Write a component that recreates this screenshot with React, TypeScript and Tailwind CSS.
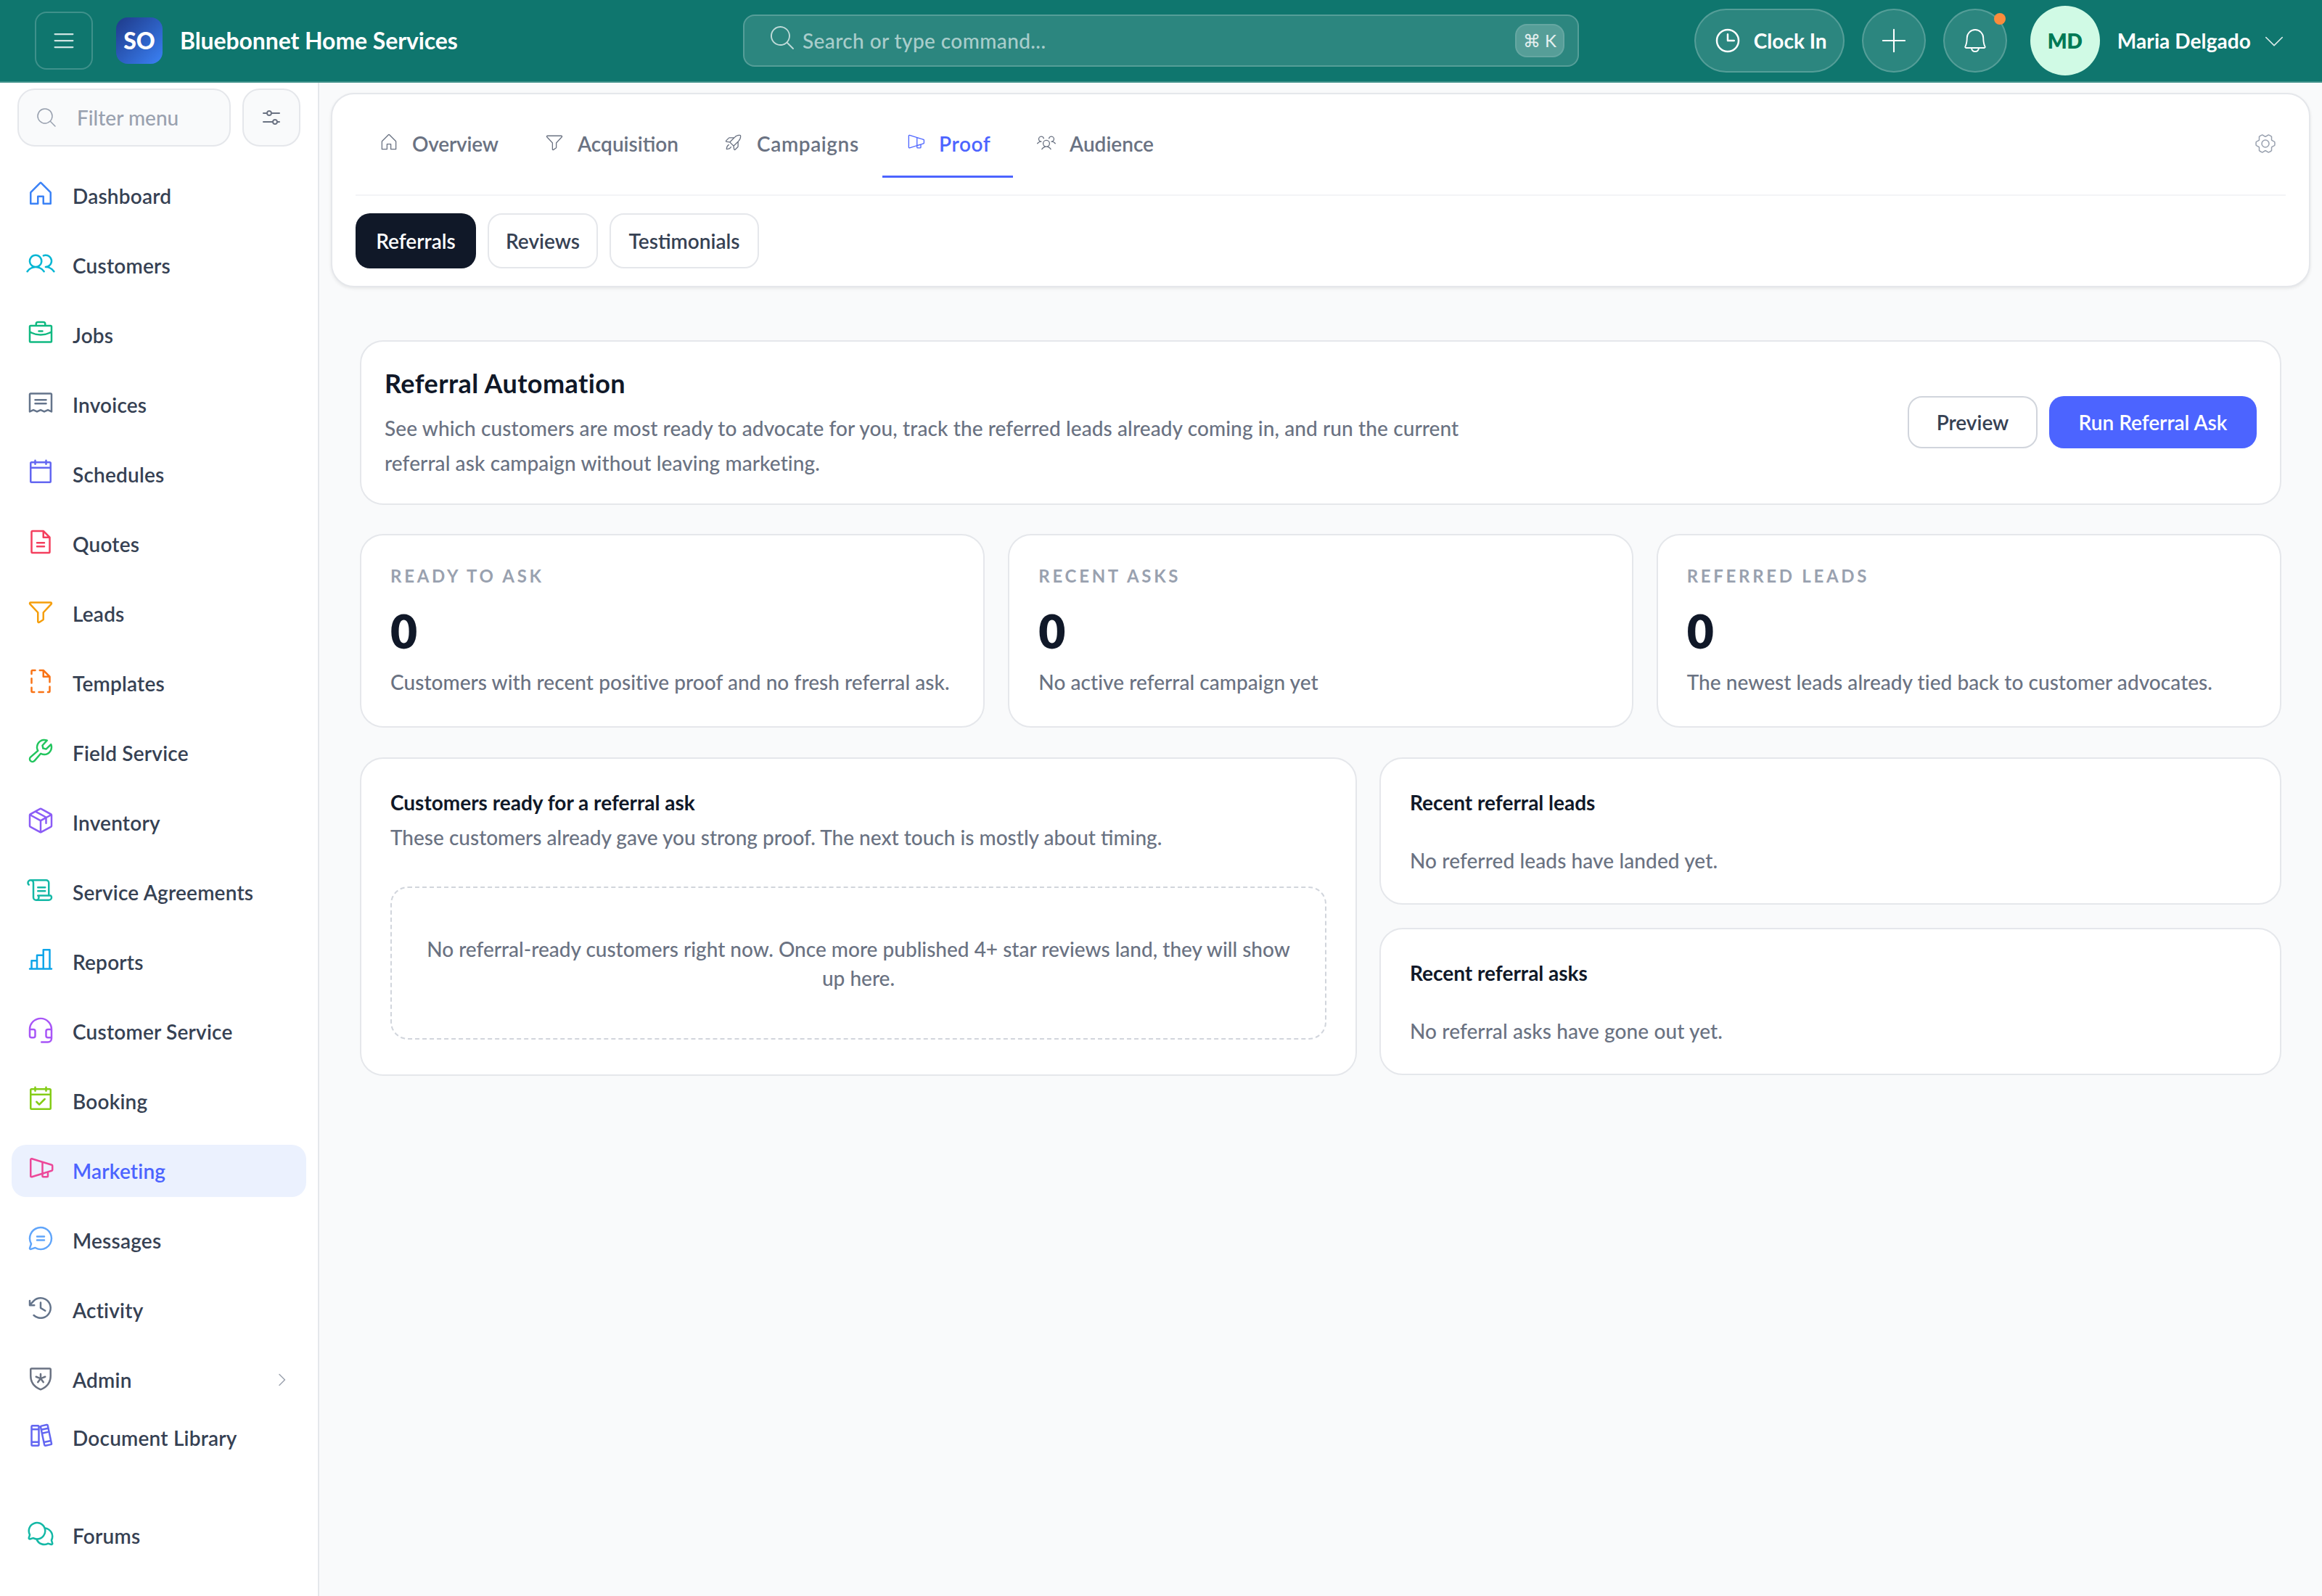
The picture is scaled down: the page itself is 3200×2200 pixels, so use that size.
import React from "react";
import {
  PiList, PiMagnifyingGlassLight, PiSlidersHorizontal, PiHouse, PiUsers, PiBriefcase, PiReceipt, PiCalendarBlank,
  PiFileText, PiFunnel, PiFileDashed, PiWrench, PiPackage, PiScroll, PiChartBar, PiHeadset, PiCalendarCheck,
  PiMegaphoneSimple, PiChatCircleText, PiClockCounterClockwise, PiShieldStar, PiCaretRight, PiBooks, PiChatsCircle,
  PiHouseLight, PiFunnelLight, PiRocketLaunchLight, PiMegaphoneSimpleLight, PiUsersThreeLight, PiGearSixLight, PiClock,
  PiPlusLight, PiBellLight, PiCaretDownLight,
} from "react-icons/pi";

const nav = [
  { label: "Dashboard", Icon: PiHouse, color: "text-[#3b82f6]" },
  { label: "Customers", Icon: PiUsers, color: "text-[#06b6d4]" },
  { label: "Jobs", Icon: PiBriefcase, color: "text-[#10b981]" },
  { label: "Invoices", Icon: PiReceipt, color: "text-[#64748b]" },
  { label: "Schedules", Icon: PiCalendarBlank, color: "text-[#6366f1]" },
  { label: "Quotes", Icon: PiFileText, color: "text-[#f43f5e]" },
  { label: "Leads", Icon: PiFunnel, color: "text-[#f59e0b]" },
  { label: "Templates", Icon: PiFileDashed, color: "text-[#f97316]" },
  { label: "Field Service", Icon: PiWrench, color: "text-[#22c55e]" },
  { label: "Inventory", Icon: PiPackage, color: "text-[#8b5cf6]" },
  { label: "Service Agreements", Icon: PiScroll, color: "text-[#14b8a6]" },
  { label: "Reports", Icon: PiChartBar, color: "text-[#0ea5e9]" },
  { label: "Customer Service", Icon: PiHeadset, color: "text-[#a855f7]" },
  { label: "Booking", Icon: PiCalendarCheck, color: "text-[#84cc16]" },
  { label: "Marketing", Icon: PiMegaphoneSimple, color: "text-[#ec4899]", active: true },
  { label: "Messages", Icon: PiChatCircleText, color: "text-[#60a5fa]" },
  { label: "Activity", Icon: PiClockCounterClockwise, color: "text-[#64748b]" },
];

function NavRow({ label, Icon, color, active, chevron }: { label: string; Icon: React.ComponentType<{ className?: string }>; color: string; active?: boolean; chevron?: boolean }) {
  return (
    <div className={`mx-4 flex h-[72px] items-center gap-6 rounded-[20px] px-5 ${active ? "bg-[#ebf1fe]" : ""}`}>
      <Icon className={`-mt-[7px] h-10 w-10 shrink-0 ${color}`} />
      <span className={`text-[28px] font-semibold tracking-[0.2px] ${active ? "text-[#4c64ff]" : "text-[#364153]"}`}>{label}</span>
      {chevron && <PiCaretRight className="ml-auto mr-[2px] h-6 w-6 text-[#9ca3af]" />}
    </div>
  );
}

const tabs = [
  { label: "Overview", Icon: PiHouseLight, cls: "w-[228px] tracking-[-0.2px]" },
  { label: "Acquisition", Icon: PiFunnelLight, cls: "w-[247px]" },
  { label: "Campaigns", Icon: PiRocketLaunchLight, cls: "w-[251px] tracking-[0.6px]" },
  { label: "Proof", Icon: PiMegaphoneSimpleLight, cls: "w-[180px] tracking-[0.6px]", active: true },
  { label: "Audience", Icon: PiUsersThreeLight, cls: "w-[224px]" },
];

function Stat({ label, text }: { label: string; text: string }) {
  return (
    <div className="h-[267px] rounded-[32px] border-2 border-[#e5e7eb] bg-white px-10 pt-[40px]">
      <div className="text-[24px] font-bold leading-[32px] tracking-[3.7px] text-[#99a1af]">{label}</div>
      <div className="mt-[28px] text-[64px] font-extrabold leading-[64px] text-[#101828]">0</div>
      <div className="mt-[18px] text-[28px] font-medium leading-[40px] tracking-[0.05px] text-[#6a7282]">{text}</div>
    </div>
  );
}

function SidePanel({ title, text }: { title: string; text: string }) {
  return (
    <div className="h-[203px] rounded-[32px] border-2 border-[#e5e7eb] bg-white px-10 pt-[40px]">
      <div className="text-[28px] font-bold leading-[40px] text-[#101828]">{title}</div>
      <div className="mt-[40px] text-[28px] font-medium leading-[40px] tracking-[0.1px] text-[#6a7282]">{text}</div>
    </div>
  );
}

export default function App() {
  return (
    <div className="flex h-[2200px] w-[3200px] flex-col overflow-hidden bg-[#f9fafb] font-['Lato','Noto_Sans',sans-serif]">
      <header className="grid h-[114px] shrink-0 grid-cols-[1024px_1152px_1024px] items-center border-b-2 border-[#3f918a] bg-[#0f766e]">
        <div className="flex items-center pl-12">
          <button className="flex h-20 w-20 items-center justify-center rounded-2xl border-2 border-white/20 text-white/80">
            <PiList className="h-9 w-9" />
          </button>
          <div className="ml-8 flex h-16 w-16 items-center justify-center rounded-2xl bg-gradient-to-br from-[#1e3a8a] to-[#3b82f6] text-[32px] font-black text-white">SO</div>
          <div className="ml-6 text-[32px] font-bold tracking-[-0.1px] text-white">Bluebonnet Home Services</div>
        </div>
        <div className="flex h-[72px] items-center rounded-2xl border-2 border-white/20 bg-white/[0.12] pl-8 pr-[18px]">
          <PiMagnifyingGlassLight className="-mt-2 h-10 w-10 text-white/70" />
          <span className="ml-[8px] text-[28px] font-medium tracking-[0.4px] text-white/60">Search or type command...</span>
          <span className="ml-auto flex h-[46px] w-[68px] items-center justify-center rounded-2xl border-2 border-white/10 bg-white/20 text-[24px] text-white/85">⌘ K</span>
        </div>
        <div className="flex items-center justify-end gap-6 pr-12">
          <button className="flex h-[88px] w-[207px] items-center gap-4 rounded-full border-2 border-white/20 bg-white/[0.12] pl-[24px] text-[28px] font-bold text-white">
            <PiClock className="h-10 w-10" />
            Clock In
          </button>
          <button className="flex h-[88px] w-[88px] items-center justify-center rounded-full border-2 border-white/20 bg-white/[0.12] text-white">
            <PiPlusLight className="h-11 w-11" />
          </button>
          <button className="relative flex h-[88px] w-[88px] items-center justify-center rounded-full border-2 border-white/20 bg-white/[0.12] text-white">
            <PiBellLight className="h-10 w-10" />
            <span className="absolute right-0 top-[4px] h-4 w-4 rounded-full bg-[#fb8c3c]" />
          </button>
          <div className="ml-2 flex h-24 w-24 items-center justify-center rounded-full bg-[#d0fae5] text-[28px] font-extrabold text-[#007a55]">MD</div>
          <span className="text-[28px] font-bold tracking-[0.1px] text-white">Maria Delgado</span>
          <PiCaretDownLight className="-ml-[10px] h-9 w-9 text-white/85" />
        </div>
      </header>

      <div className="flex min-h-0 flex-1">
        <aside className="flex w-[440px] shrink-0 flex-col border-r-2 border-[#e5e7eb] bg-white pt-2">
          <div className="mx-6 flex gap-4">
            <div className="flex h-20 w-[296px] items-center gap-[26px] rounded-3xl border-2 border-[#e5e7eb] bg-[#f9fafb] pl-[22px] text-[28px] font-medium text-[#99a1af]">
              <PiMagnifyingGlassLight className="h-8 w-8" />
              Filter menu
            </div>
            <div className="flex h-20 w-20 items-center justify-center rounded-3xl border-2 border-[#e5e7eb] bg-[#f9fafb] text-[#6a7282]">
              <PiSlidersHorizontal className="h-8 w-8" />
            </div>
          </div>
          <nav className="mt-8 flex flex-col gap-6">
            {nav.map((n) => <NavRow key={n.label} {...n} />)}
            <NavRow label="Admin" Icon={PiShieldStar} color="text-[#6a7282]" chevron />
          </nav>
          <div className="mt-2">
            <NavRow label="Document Library" Icon={PiBooks} color="text-[#6366f1]" />
          </div>
          <div className="mt-[63px]">
            <NavRow label="Forums" Icon={PiChatsCircle} color="text-[#14b8a6]" />
          </div>
        </aside>

        <main className="min-w-0 flex-1 px-4 pt-[14px]">
          <section className="h-[268px] rounded-[32px] border-2 border-[#e5e7eb] bg-white px-[32px] shadow-[0_2px_4px_rgba(0,0,0,0.08)]">
            <div className="flex h-[140px] items-start border-b-2 border-[#f3f4f6]">
              {tabs.map(({ label, Icon, active, cls }) => (
                <div key={label} className={`flex h-[115px] items-center gap-[18px] border-b-[3px] pl-8 pt-[23px] text-[28px] font-semibold ${cls} ${active ? "border-[#4c64ff] text-[#4c64ff]" : "border-transparent text-[#6a7282]"}`}>
                  <Icon className="-mt-1 h-7 w-7 shrink-0" />
                  {label}
                </div>
              ))}
              <PiGearSixLight className="ml-auto mr-[12px] mt-[52px] h-8 w-8 text-[#99a1af]" />
            </div>
            <div className="mt-[24px] flex gap-4">
              <div className="flex h-[76px] w-[166px] items-center justify-center rounded-[20px] bg-[#101828] text-[28px] font-semibold text-white">Referrals</div>
              <div className="flex h-[76px] w-[152px] items-center justify-center rounded-[20px] border-2 border-[#e5e7eb] text-[28px] font-semibold text-[#364153]">Reviews</div>
              <div className="flex h-[76px] w-[206px] items-center justify-center rounded-[20px] border-2 border-[#e5e7eb] text-[28px] font-semibold text-[#364153]">Testimonials</div>
            </div>
          </section>

          <div className="flex flex-col pt-[73px] px-10">
            <section className="flex h-[227px] items-center justify-between rounded-[32px] border-2 border-[#e5e7eb] bg-white px-8">
              <div>
                <h1 className="text-[36px] font-bold leading-[48px] tracking-[0.4px] text-[#101828]">Referral Automation</h1>
                <p className="mt-[14px] text-[28px] font-medium leading-[48px] tracking-[0.1px] text-[#6a7282]">
                  See which customers are most ready to advocate for you, track the referred leads already coming in, and run the current<br />
                  referral ask campaign without leaving marketing.
                </p>
              </div>
              <div className="-mt-[2px] flex gap-4">
                <button className="h-[72px] w-[179px] rounded-[20px] border-2 border-[#d1d5dc] bg-white text-[28px] font-semibold text-[#364153]">Preview</button>
                <button className="h-[72px] w-[286px] rounded-[20px] bg-[#4c64ff] text-[28px] font-semibold text-white">Run Referral Ask</button>
              </div>
            </section>

            <div className="mt-10 grid grid-cols-3 gap-8">
              <Stat label="READY TO ASK" text="Customers with recent positive proof and no fresh referral ask." />
              <Stat label="RECENT ASKS" text="No active referral campaign yet" />
              <Stat label="REFERRED LEADS" text="The newest leads already tied back to customer advocates." />
            </div>

            <div className="mt-[41px] grid grid-cols-[1374px_1fr] gap-[31px]">
              <section className="h-[439px] rounded-[32px] border-2 border-[#e5e7eb] bg-white px-10 pt-[40px]">
                <div className="text-[28px] font-bold leading-[40px] text-[#101828]">Customers ready for a referral ask</div>
                <div className="mt-2 text-[28px] font-medium leading-[40px] text-[#6a7282]">These customers already gave you strong proof. The next touch is mostly about timing.</div>
                <div className="mt-[48px] flex h-[211px] items-center justify-center rounded-3xl border-2 border-dashed border-[#d1d5dc] text-center text-[28px] font-medium leading-[40px] text-[#6a7282]">
                  <p>No referral-ready customers right now. Once more published 4+ star reviews land, they will show<br />up here.</p>
                </div>
              </section>
              <div className="flex flex-col gap-8">
                <SidePanel title="Recent referral leads" text="No referred leads have landed yet." />
                <SidePanel title="Recent referral asks" text="No referral asks have gone out yet." />
              </div>
            </div>
          </div>
        </main>
      </div>
    </div>
  );
}
